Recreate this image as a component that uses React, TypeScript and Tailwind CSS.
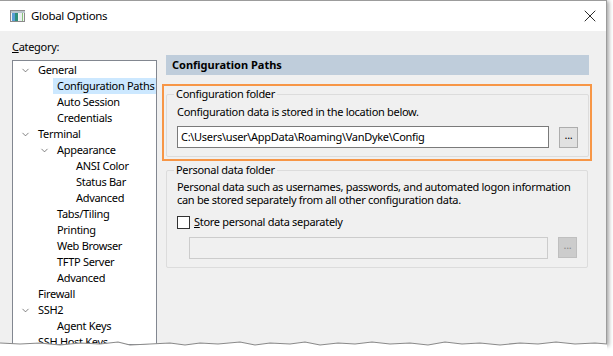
import { ChevronDown, X } from 'lucide-react'

type Node = { label: string; level: number; open?: boolean; selected?: boolean }

const tree: Node[] = [
  { label: 'General', level: 0, open: true },
  { label: 'Configuration Paths', level: 1, selected: true },
  { label: 'Auto Session', level: 1 },
  { label: 'Credentials', level: 1 },
  { label: 'Terminal', level: 0, open: true },
  { label: 'Appearance', level: 1, open: true },
  { label: 'ANSI Color', level: 2 },
  { label: 'Status Bar', level: 2 },
  { label: 'Advanced', level: 2 },
  { label: 'Tabs/Tiling', level: 1 },
  { label: 'Printing', level: 1 },
  { label: 'Web Browser', level: 1 },
  { label: 'TFTP Server', level: 1 },
  { label: 'Advanced', level: 1 },
  { label: 'Firewall', level: 0 },
  { label: 'SSH2', level: 0, open: true },
  { label: 'Agent Keys', level: 1 },
  { label: 'SSH Host Keys', level: 0 },
]

const indent = ['pl-[6px]', 'pl-[25px]', 'pl-[44px]']

function TreeRow({ node }: { node: Node }) {
  return (
    <div className={`flex h-4 items-center whitespace-nowrap ${indent[node.level]}`}>
      <span className="flex w-[12px] shrink-0 items-center justify-center">
        {node.open && <ChevronDown size={11} strokeWidth={1.6} className="text-[#555]" />}
      </span>
      <span
        className={`ml-[3px] pl-[4px] pr-[3px] leading-4 ${node.selected ? 'bg-[#cce8ff]' : ''}`}
      >
        {node.label}
      </span>
    </div>
  )
}

function GroupBox({ title, children }: { title: string; children: React.ReactNode }) {
  return (
    <fieldset className="rounded-[2px] border border-[#dcdcdc] px-[10px] pb-2">
      <legend className="ml-[-3px] px-[2px] leading-4">{title}</legend>
      {children}
    </fieldset>
  )
}

function AppIcon() {
  return (
    <svg width="15" height="12" viewBox="0 0 15 12">
      <rect x="0.5" y="0.5" width="14" height="11" fill="#f4f4f4" stroke="#8a8a8a" />
      <rect x="1" y="1" width="14" height="2" fill="#b9c4cc" />
      <rect x="2" y="3" width="6" height="8" fill="#2f8f7a" />
      <rect x="2" y="3" width="3" height="8" fill="#5a9ed6" />
      <rect x="9" y="3" width="4" height="8" fill="#e9eef0" />
      <rect x="12" y="3" width="1" height="8" fill="#86c37a" />
    </svg>
  )
}

export default function App() {
  return (
    <div
      className="relative h-[356px] w-[613px] overflow-hidden bg-white text-[11px] tracking-[-0.3px] text-black"
      style={{ fontFamily: '"Noto Sans", Arial, sans-serif' }}
    >
      <div className="flex h-[345px] w-[607px] flex-col overflow-hidden border-r border-t border-[#9c9c9c] bg-[#f0f0f0] shadow-[2px_1px_4px_rgba(0,0,0,0.35)]">
        <div className="flex h-[30px] shrink-0 items-center bg-white pl-[10px]">
          <AppIcon />
          <span className="ml-[6px] text-[11.5px]">Global Options</span>
          <X size={20} strokeWidth={1} className="ml-auto mr-[6px] text-black" />
        </div>

        <div className="flex min-h-0 flex-1 pl-[12px] pt-[8px]">
          <div className="flex w-[145px] shrink-0 flex-col">
            <div className="leading-4">
              <span className="underline">C</span>ategory:
            </div>
            <div className="mt-[5px] flex-1 overflow-hidden border border-[#828790] bg-white pt-[1px]">
              {tree.map((n, i) => (
                <TreeRow key={i} node={n} />
              ))}
            </div>
          </div>

          <div className="ml-[5px] flex w-[430px] flex-col">
            <div className="ml-[4px] mt-[16px] flex h-[20px] w-[423px] items-center bg-[#bfcddb] pl-[6px] font-bold tracking-normal">
              Configuration Paths
            </div>

            <div className="mt-[9px] border-2 border-[#f79646] px-[2px] pb-[2px]">
              <GroupBox title="Configuration folder">
                <div className="mt-[2px] leading-4">
                  Configuration data is stored in the location below.
                </div>
                <div className="mt-[6px] flex items-center">
                  <div className="flex h-[22px] w-[372px] items-center border border-[#7a7a7a] bg-white px-[3px]">
                    C:\Users\user\AppData\Roaming\VanDyke\Config
                  </div>
                  <div className="ml-[10px] flex h-[21px] w-[19px] items-center justify-center border border-[#adadad] bg-[#e1e1e1] pb-[4px]">
                    ...
                  </div>
                </div>
              </GroupBox>
            </div>

            <div className="mx-[4px] mt-[1px]">
              <GroupBox title="Personal data folder">
                <div className="mt-[2px] whitespace-nowrap leading-[13px]">
                  Personal data such as usernames, passwords, and automated logon information
                  <br />
                  can be stored separately from all other configuration data.
                </div>
                <div className="mt-[8px] flex items-center">
                  <span className="h-[13px] w-[13px] border border-[#333] bg-white" />
                  <span className="ml-[4px]">
                    <span className="underline">S</span>tore personal data separately
                  </span>
                </div>
                <div className="mt-[6px] flex items-center pl-[12px]">
                  <div className="h-[22px] w-[359px] border border-[#cccccc] bg-[#f0f0f0]" />
                  <div className="ml-[10px] flex h-[21px] w-[19px] items-center justify-center border border-[#bfbfbf] bg-[#cccccc] pb-[4px] text-[#8a8a8a]">
                    ...
                  </div>
                </div>
              </GroupBox>
            </div>
          </div>
        </div>
      </div>

      <svg className="absolute left-0 top-[339px]" width="613" height="12" viewBox="0 0 613 12">
        <polygon
          points="0,4 20,5 40,4 60,6 80,4 100,5 118,3 130,6 150,5 170,4 185,6 200,4 218,5 240,3 255,6 270,4 290,5 305,3 320,6 338,4 355,5 372,3 390,5 410,4 428,6 445,3 462,5 480,4 500,6 520,4 538,5 556,3 575,5 595,4 607,5 607,12 0,12"
          fill="#ffffff"
        />
        <polyline
          points="0,4 20,5 40,4 60,6 80,4 100,5 118,3 130,6 150,5 170,4 185,6 200,4 218,5 240,3 255,6 270,4 290,5 305,3 320,6 338,4 355,5 372,3 390,5 410,4 428,6 445,3 462,5 480,4 500,6 520,4 538,5 556,3 575,5 595,4 607,5"
          fill="none"
          stroke="#8a8a8a"
          strokeWidth="1.2"
        />
      </svg>
    </div>
  )
}
